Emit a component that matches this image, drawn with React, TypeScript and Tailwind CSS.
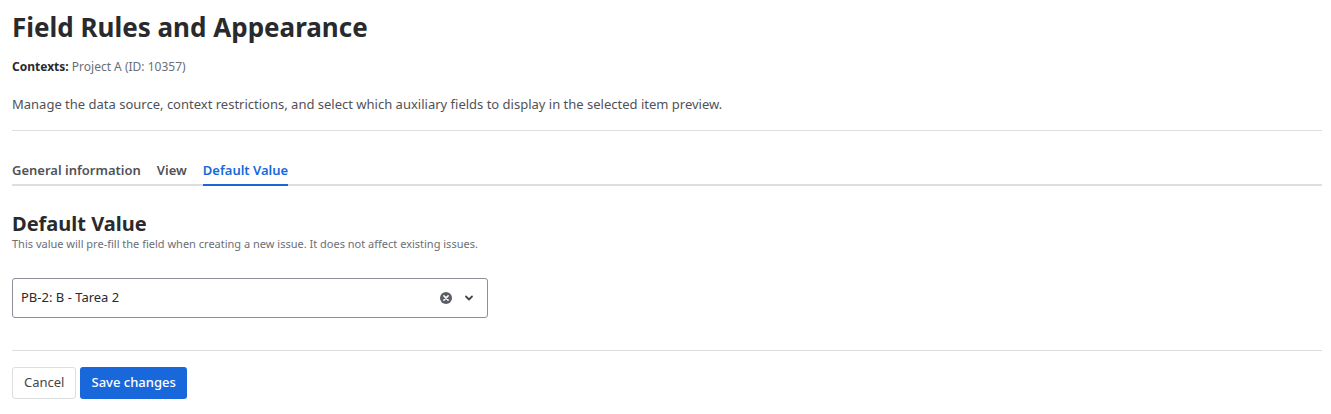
import { useState } from "react";

function Tabs({ tab, setTab }: { tab: string; setTab: (t: string) => void }) {
  const items = ["General information", "View", "Default Value"];
  return (
    <div className="flex gap-4 border-b-2 border-[#dddee1]">
      {items.map((item) => (
        <button
          key={item}
          onClick={() => setTab(item)}
          className={`-mb-[2px] pb-[3px] text-[13px] font-semibold border-b-2 ${
            tab === item ? "text-[#1868db] border-[#1868db]" : "text-[#505258] border-transparent"
          }`}
        >
          {item}
        </button>
      ))}
    </div>
  );
}

export default function App() {
  const [tab, setTab] = useState("Default Value");
  return (
    <div className="pl-3 pr-[9px] pt-[10px] bg-white text-[#292a2e] font-['Segoe_UI','Noto_Sans',sans-serif] min-h-[414px]">
      <h1 className="text-[26px] font-bold leading-[34px]">Field Rules and Appearance</h1>
      <p className="mt-[15px] text-[12px] leading-[16px]">
        <span className="font-bold">Contexts:</span> <span className="text-[#6b6e76]">Project A (ID: 10357)</span>
      </p>
      <p className="mt-[20px] text-[13px] leading-[18px] text-[#505258]">
        Manage the data source, context restrictions, and select which auxiliary fields to display in the selected item preview.
      </p>
      <hr className="mt-[17px] border-[#dddee1]" />
      <div className="mt-[30px]">
        <Tabs tab={tab} setTab={setTab} />
      </div>
      <h2 className="mt-[26px] text-[20px] font-bold leading-[24px]">Default Value</h2>
      <p className="text-[11px] leading-[16px] text-[#6b6e76]">
        This value will pre-fill the field when creating a new issue. It does not affect existing issues.
      </p>
      <div className="mt-[26px] w-[476px] h-[40px] border border-[#8c8f97] rounded-[3px] flex items-center pl-2 pr-[13px]">
        <span className="flex-1 text-[13px]">PB-2: B - Tarea 2</span>
        <svg width="12" height="12" viewBox="0 0 16 16" className="mr-[12px]">
          <circle cx="8" cy="8" r="8" fill="#5b5e66" />
          <path d="M5.2 5.2l5.6 5.6M10.8 5.2l-5.6 5.6" stroke="#fff" strokeWidth="2" strokeLinecap="round" />
        </svg>
        <svg width="10" height="10" viewBox="0 0 10 10">
          <path d="M2 3.5l3 3 3-3" stroke="#44464d" strokeWidth="1.8" fill="none" strokeLinecap="round" strokeLinejoin="round" />
        </svg>
      </div>
      <hr className="mt-[32px] border-[#dddee1]" />
      <div className="mt-[16px] flex gap-[4px]">
        <button className="h-[32px] px-[11px] text-[13px] text-[#44464d] border border-[#dddee1] rounded-[3px]">Cancel</button>
        <button className="h-[32px] px-[11px] text-[13px] text-white bg-[#1868db] rounded-[3px] font-medium">Save changes</button>
      </div>
    </div>
  );
}
